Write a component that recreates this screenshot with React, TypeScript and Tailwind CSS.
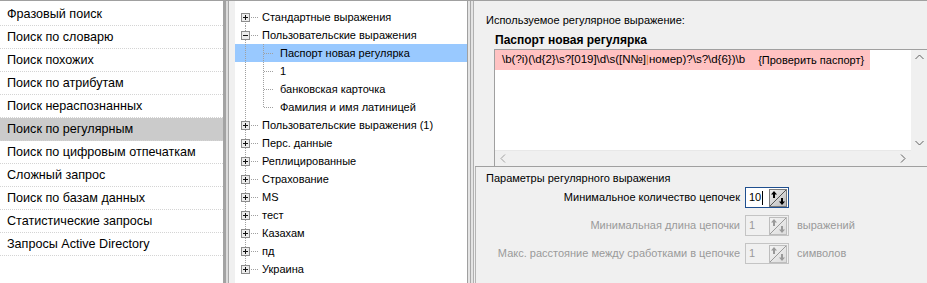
import React from "react";

const leftItems = [
  "Фразовый поиск",
  "Поиск по словарю",
  "Поиск похожих",
  "Поиск по атрибутам",
  "Поиск нераспознанных",
  "Поиск по регулярным",
  "Поиск по цифровым отпечаткам",
  "Сложный запрос",
  "Поиск по базам данных",
  "Статистические запросы",
  "Запросы Active Directory",
];

type Node = { label: string; kind: "root" | "child"; open?: boolean; last?: boolean; selected?: boolean; firstRoot?: boolean; lastRoot?: boolean };

const tree: Node[] = [
  { label: "Стандартные выражения", kind: "root", firstRoot: true },
  { label: "Пользовательские выражения", kind: "root", open: true },
  { label: "Паспорт новая регулярка", kind: "child", selected: true },
  { label: "1", kind: "child" },
  { label: "банковская карточка", kind: "child" },
  { label: "Фамилия и имя латиницей", kind: "child", last: true },
  { label: "Пользовательские выражения (1)", kind: "root" },
  { label: "Перс. данные", kind: "root" },
  { label: "Реплицированные", kind: "root" },
  { label: "Страхование", kind: "root" },
  { label: "MS", kind: "root" },
  { label: "тест", kind: "root" },
  { label: "Казахам", kind: "root" },
  { label: "пд", kind: "root" },
  { label: "Украина", kind: "root", lastRoot: true },
];

const dot = { stroke: "#a0a0a0", strokeWidth: 1, strokeDasharray: "1 1", shapeRendering: "crispEdges" as const };

function TreeLines({ n }: { n: Node }) {
  return (
    <svg width="50" height="18" className="absolute left-0 top-0">
      {n.kind === "root" ? (
        <>
          <line x1="10.5" y1={n.firstRoot ? 9 : 0} x2="10.5" y2={n.lastRoot ? 9 : 18} {...dot} />
          <line x1="16" y1="9.5" x2="24" y2="9.5" {...dot} />
          <rect x="6.5" y="5.5" width="8" height="8" fill="#ececec" stroke="#8c8c8c" shapeRendering="crispEdges" />
          <line x1="8" y1="9.5" x2="13" y2="9.5" stroke="#111" shapeRendering="crispEdges" />
          {!n.open && <line x1="10.5" y1="7" x2="10.5" y2="12" stroke="#111" shapeRendering="crispEdges" />}
        </>
      ) : (
        <>
          <line x1="10.5" y1="0" x2="10.5" y2="18" {...dot} />
          <line x1="28.5" y1="0" x2="28.5" y2={n.last ? 9 : 18} {...dot} />
          <line x1="29" y1="9.5" x2="38" y2="9.5" {...dot} />
        </>
      )}
    </svg>
  );
}

function SpinIcon({ disabled }: { disabled?: boolean }) {
  const c = disabled ? "#9a9a9a" : "#000";
  return (
    <svg width="18" height="18" viewBox="0 0 18 18">
      <defs>
        <linearGradient id={disabled ? "gd" : "ge"} x1="0" y1="0" x2="1" y2="1">
          <stop offset="0" stopColor={disabled ? "#f4f4f4" : "#f2f2f2"} />
          <stop offset="1" stopColor={disabled ? "#dcdcdc" : "#b8b8b8"} />
        </linearGradient>
      </defs>
      <rect x="0.5" y="0.5" width="17" height="17" fill={`url(#${disabled ? "gd" : "ge"})`} stroke={disabled ? "#bdbdbd" : "#7a7a7a"} shapeRendering="crispEdges" />
      <line x1="1" y1="17" x2="17" y2="1" stroke={disabled ? "#9a9a9a" : "#555"} />
      <path d="M5 2 L8 5.5 L6 5.5 L6 9 L4 9 L4 5.5 L2 5.5 Z" fill={c} />
      <path d="M13 16 L10 12.5 L12 12.5 L12 9 L14 9 L14 12.5 L16 12.5 Z" fill={c} />
    </svg>
  );
}

function Spin({ value, disabled, focused }: { value: string; disabled?: boolean; focused?: boolean }) {
  return (
    <div
      className={
        "flex h-[21px] w-[44px] shrink-0 items-center justify-between border pl-[3px] pr-px " +
        (focused ? "border-[#1f4f8f] bg-white" : "border-[#c4c4c4] bg-[#f0f0f0]")
      }
    >
      <span className={"flex items-center text-[11px] " + (disabled ? "text-[#9a9a9a]" : "text-black")}>
        {value}
        {focused && <span className="ml-[1px] inline-block h-[14px] w-px bg-black" />}
      </span>
      <SpinIcon disabled={disabled} />
    </div>
  );
}

export default function App() {
  return (
    <div
      className="flex h-[283px] w-[927px] overflow-hidden border-t border-[#a0a0a0] bg-[#f0f0f0] text-black"
      style={{ fontFamily: '"Liberation Sans", Arial, sans-serif' }}
    >
      {/* Left list */}
      <div className="w-[223px] shrink-0 bg-white pt-[2px]">
        {leftItems.map((t) => (
          <div
            key={t}
            className={
              "flex h-[23px] items-center border-b border-dotted border-[#d4d4d4] pl-[7px] text-[12.6px] " +
              (t === "Поиск по регулярным" ? "bg-[#cbcbcb]" : "")
            }
          >
            {t}
          </div>
        ))}
      </div>

      {/* Splitter 1 */}
      <div className="flex w-[12px] shrink-0">
        <div className="w-[3px] bg-[#a3a3a3]" />
        <div className="w-[2px] bg-[#dcdcdc]" />
        <div className="w-px bg-[#a8a8a8]" />
        <div className="flex-1 bg-[#f0f0f0]" />
      </div>

      {/* Tree */}
      <div className="w-[232px] shrink-0 bg-white pt-[7px]">
        {tree.map((n) => (
          <div
            key={n.label}
            className={"relative flex h-[18px] items-center text-[11px] " + (n.selected ? "bg-[#99c9ff]" : "")}
            style={{ paddingLeft: n.kind === "root" ? 27 : 45 }}
          >
            <TreeLines n={n} />
            <span className="relative">{n.label}</span>
          </div>
        ))}
      </div>

      {/* Splitter 2 */}
      <div className="flex w-[8px] shrink-0">
        <div className="w-px bg-[#a0a0a0]" />
        <div className="w-[2px] bg-[#e4e4e4]" />
        <div className="w-px bg-[#a8a8a8]" />
        <div className="w-[2px] bg-[#e4e4e4]" />
        <div className="w-px bg-[#b0b0b0]" />
        <div className="flex-1 bg-[#f0f0f0]" />
      </div>

      {/* Right panel */}
      <div className="flex min-w-0 flex-1 flex-col">
        <div className="flex h-[165px] flex-col pl-[11px]">
          <div className="mt-[11px] h-[16px] text-[11px] leading-[16px]">Используемое регулярное выражение:</div>
          <div className="ml-[9px] mt-[4px] h-[16px] text-[12px] font-bold leading-[16px]">Паспорт новая регулярка</div>
          <div className="ml-[8px] mt-[1px] flex flex-1 flex-col border border-b-0 border-r-0 border-[#a0a0a0] bg-white">
            <div className="flex flex-1">
              <div className="flex-1">
                <div className="flex h-[20px] w-[375px] items-center bg-[#ffc2c2] pl-[7px] text-[11px] whitespace-pre">
                  <span className="text-[11.5px]">{"\\b(?i)(\\d{2}\\s?[019]\\d\\s([N№]"}</span>
                  <span className="text-[11.5px] text-[#d9822b]">|</span>
                  <span className="text-[11.5px]">{"номер)?\\s?\\d{6})\\b"}</span>
                  <span className="ml-[13px]">{"{Проверить паспорт}"}</span>
                </div>
              </div>
              <div className="flex w-[16px] flex-col items-center justify-between bg-[#f0f0f0] py-[4px]">
                <svg width="9" height="6" viewBox="0 0 9 6"><path d="M0.5 5 L4.5 1 L8.5 5" fill="none" stroke="#606060" /></svg>
                <svg width="9" height="6" viewBox="0 0 9 6"><path d="M0.5 1 L4.5 5 L8.5 1" fill="none" stroke="#606060" /></svg>
              </div>
            </div>
            <div className="flex h-[16px]">
              <div className="flex flex-1 items-center justify-between border-t border-[#e8e8e8] bg-[#f0f0f0] px-[5px]">
                <svg width="6" height="9" viewBox="0 0 6 9"><path d="M5 0.5 L1 4.5 L5 8.5" fill="none" stroke="#a0a0a0" /></svg>
                <svg width="6" height="9" viewBox="0 0 6 9"><path d="M1 0.5 L5 4.5 L1 8.5" fill="none" stroke="#606060" /></svg>
              </div>
              <div className="w-[16px] bg-[#f0f0f0]" />
            </div>
          </div>
        </div>
        <div className="h-px bg-[#a0a0a0]" />
        <div className="flex flex-1 flex-col border-l border-[#b4b4b4] bg-[#f0f0f0] pl-[10px]">
          <div className="mt-[3px] h-[16px] text-[11px] leading-[16px]">Параметры регулярного выражения</div>
          <div className="mt-[1px] flex flex-col gap-[7px]">
            <div className="flex items-center">
              <div className="w-[259px] shrink-0 whitespace-nowrap pr-[5px] text-right text-[11px]">Минимальное количество цепочек</div>
              <Spin value="10" focused />
            </div>
            <div className="flex items-center">
              <div className="w-[259px] shrink-0 whitespace-nowrap pr-[5px] text-right text-[11px] text-[#9a9a9a]">Минимальная длина цепочки</div>
              <Spin value="1" disabled />
              <div className="ml-[8px] text-[11px] text-[#9a9a9a]">выражений</div>
            </div>
            <div className="flex items-center">
              <div className="w-[259px] shrink-0 whitespace-nowrap pr-[5px] text-right text-[11px] text-[#9a9a9a]">Макс. расстояние между сработками в цепочке</div>
              <Spin value="1" disabled />
              <div className="ml-[8px] text-[11px] text-[#9a9a9a]">символов</div>
            </div>
          </div>
        </div>
      </div>
    </div>
  );
}
